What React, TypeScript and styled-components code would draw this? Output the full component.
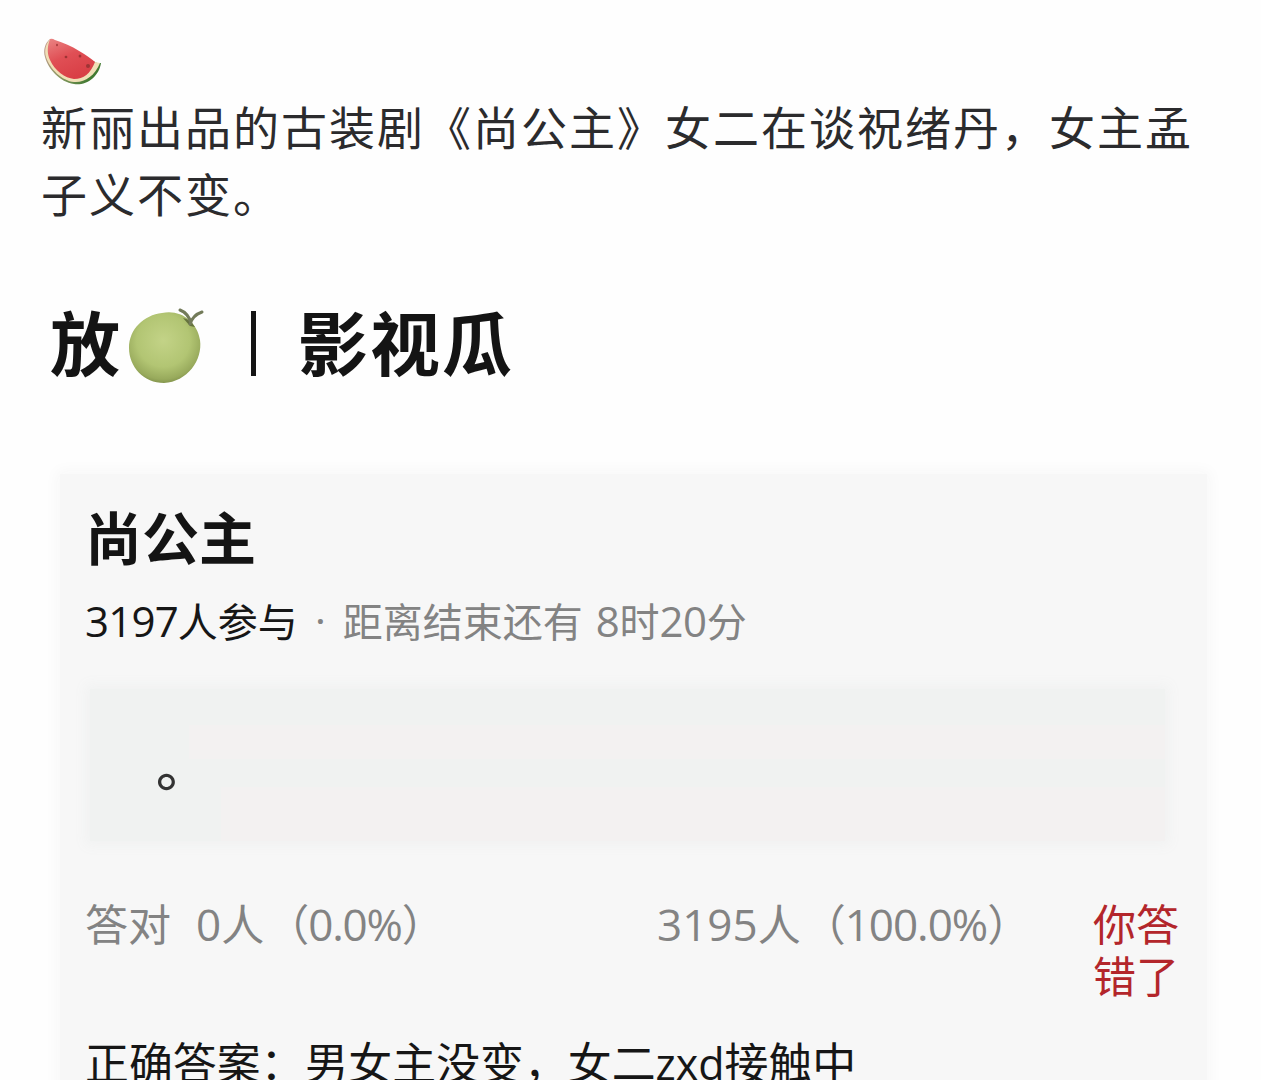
import styled, {createGlobalStyle} from 'styled-components';

/* -------------------------------------------------------------------------- */
/*                                   Styles                                   */
/* -------------------------------------------------------------------------- */
const GlobalStyle = createGlobalStyle`
  body {
    margin: 0;
    background-color: #fefefe;
    font-family: 'Noto Sans CJK SC', sans-serif;
  }

  h1,
  h2,
  p {
    margin: 0;
  }
`;

const Post = styled.main`
  box-sizing: border-box;
  height: 1080px;
  padding: 38px 40px 0 41px;
  overflow: hidden;
`;

const WatermelonIcon = styled.svg`
  display: block;
  width: 60px;
  height: 48px;
  margin-left: 2px;
`;

const Content = styled.p`
  margin-top: 6px;
  width: 1175px;
  font-size: 46px;
  line-height: 67px;
  letter-spacing: 2px;
  color: #2b2b2d;
`;

const Title = styled.h1`
  display: flex;
  align-items: center;
  height: 90px;
  margin: 72px 0 0 9px;
  font-size: 70px;
  font-weight: 700;
  line-height: 90px;
  letter-spacing: 2px;
  color: #141414;
`;

const TitleText = styled.span`
  margin-top: -4px;
`;

const MelonIcon = styled.svg`
  width: 78px;
  height: 78px;
  margin: 5px 46px 0 5px;
`;

const Divider = styled.span`
  width: 5px;
  height: 65px;
  margin-right: 42px;
  background-color: #141414;
`;

const Card = styled.section`
  box-sizing: border-box;
  height: 640px;
  width: 1147px;
  margin: 86px 0 0 19px;
  padding: 21px 26px 0;
  background-color: #f7f7f7;
  box-shadow: 0 0 14px 3px #f7f7f7;
`;

const CardTitle = styled.h2`
  margin-left: -1px;
  font-size: 57px;
  font-weight: 700;
  line-height: 80px;
  color: #141414;
`;

const Meta = styled.div`
  display: flex;
  margin-top: 7px;
  font-size: 40px;
  line-height: 76px;
  color: #838383;
`;

const Participants = styled.span`
  margin-left: -1px;
  color: #161616;
`;

const Dot = styled.span`
  display: flex;
  align-items: center;
  justify-content: center;
  width: 45px;
  font-family: 'Open Sans', sans-serif;
  font-size: 34px;
  font-weight: 600;
`;

const Latin = styled.span<{$size: number; $spacing?: number}>`
  font-family: 'Open Sans', 'Noto Sans', sans-serif;
  font-size: ${({$size}) => $size}px;
  letter-spacing: ${({$spacing = 0}) => $spacing}px;
`;

const Remaining = styled.span`
  word-spacing: 4px;
`;

const Answer = styled.div`
  box-sizing: border-box;
  height: 152px;
  margin: 30px 16px 0 4px;
  padding: 35px 0 0 66px;
  font-size: 54px;
  font-weight: 500;
  line-height: 80px;
  color: #333;
  background:
    linear-gradient(#f3f1f1, #f3f1f1) 99px 36px / 100% 34px no-repeat,
    linear-gradient(#f3f1f1, #f3f1f1) 131px 98px / 100% 60px no-repeat,
    #f0f2f1;
  box-shadow: 0 0 12px 5px #f1f2f2;
`;

const Stats = styled.div`
  display: flex;
  margin: 55px 0 0 -1px;
  font-size: 43px;
  line-height: 52px;
  color: #838383;
`;

const Stat = styled.span<{$width: number}>`
  flex: none;
  width: ${({$width}) => $width}px;
  white-space: pre;
`;

const Percent = styled.span`
  margin-left: 2px;
  letter-spacing: -1px;
`;

const Verdict = styled.span`
  width: 88px;
  color: #b3262b;
`;

const CorrectAnswer = styled.p`
  margin: 21px 0 0 -1px;
  font-size: 43.9px;
  line-height: 80px;
  color: #161616;
  white-space: nowrap;
`;

/* -------------------------------------------------------------------------- */
/*                                    Icons                                   */
/* -------------------------------------------------------------------------- */
const Watermelon: React.FC = () => (
  <WatermelonIcon viewBox="0 0 60 48">
    <defs>
      <linearGradient id="flesh" x1="0" y1="0" x2="0.5" y2="1">
        <stop offset="0" stopColor="#ea8584" />
        <stop offset="0.5" stopColor="#e04f55" />
        <stop offset="1" stopColor="#d93f46" />
      </linearGradient>
      <linearGradient id="rind" x1="0" y1="0" x2="1" y2="0.5">
        <stop offset="0" stopColor="#c79a92" />
        <stop offset="0.55" stopColor="#8b9a63" />
        <stop offset="1" stopColor="#427a32" />
      </linearGradient>
    </defs>
    <path
      d="M7 1C2 5 0 12 2 19C5 31 17 44 31 46C43 48 56 39 58 25L54 25Z"
      fill="url(#rind)"
    />
    <path d="M7 1C3 6 1 12 3 19C7 31 19 43 31 44C41 45 52 38 57 25L52 24Z" fill="#f0dfb6" />
    <path
      d="M7 1C4 9 4 16 7 22C12 33 22 40 31 41C41 41 47 36 52 24C45 18 29 7 12 2Q9 0 7 1Z"
      fill="url(#flesh)"
    />
    <g fill="#9e3435">
      <ellipse cx="14" cy="7" rx="0.8" ry="1.2" />
      <ellipse cx="23" cy="19" rx="1.4" ry="1.2" />
      <ellipse cx="37" cy="18" rx="1.4" ry="1.6" />
      <ellipse cx="45" cy="28" rx="2" ry="2" />
    </g>
  </WatermelonIcon>
);

const Melon: React.FC = () => (
  <MelonIcon viewBox="0 0 78 78">
    <defs>
      <radialGradient id="melon" cx="0.48" cy="0.4" r="0.62">
        <stop offset="0" stopColor="#c3d387" />
        <stop offset="0.6" stopColor="#b2c573" />
        <stop offset="0.88" stopColor="#98aa5c" />
        <stop offset="1" stopColor="#7e8f49" />
      </radialGradient>
    </defs>
    <path
      d="M35 6C53 2 70 14 73 33C76 53 60 75 37 76C17 76 2 60 2 41C2 22 17 8 35 6Z"
      fill="url(#melon)"
    />
    <path d="M56 11Q63 12 68 20L63 19Z" fill="#65723d" />
    <path
      d="M53 3Q61 6 64 16M63 17Q66 8 75 5"
      fill="none"
      stroke="#737b5a"
      strokeWidth="3"
      strokeLinecap="round"
    />
  </MelonIcon>
);

/* -------------------------------------------------------------------------- */
/*                                     App                                    */
/* -------------------------------------------------------------------------- */
const App: React.FC = () => (
  <>
    <GlobalStyle />
    <Post>
      <Watermelon />
      <Content>新丽出品的古装剧《尚公主》女二在谈祝绪丹，女主孟子义不变。</Content>
      <Title>
        <TitleText>放</TitleText>
        <Melon />
        <Divider />
        <TitleText>影视瓜</TitleText>
      </Title>
      <Card>
        <CardTitle>尚公主</CardTitle>
        <Meta>
          <Participants>
            <Latin $size={42} $spacing={-0.8}>
              3197
            </Latin>
            人参与
          </Participants>
          <Dot>·</Dot>
          <Remaining>
            距离结束还有{' '}
            <Latin $size={42} $spacing={-0.4}>
              8
            </Latin>
            时
            <Latin $size={42} $spacing={-0.4}>
              20
            </Latin>
            分
          </Remaining>
        </Meta>
        <Answer>。</Answer>
        <Stats>
          <Stat $width={111}>答对</Stat>
          <Stat $width={461}>
            <Latin $size={44}>0</Latin>人
            <Percent>
              （
              <Latin $size={44} $spacing={-1.2}>
                0.0%
              </Latin>
              ）
            </Percent>
          </Stat>
          <Stat $width={436}>
            <Latin $size={44}>3195</Latin>人
            <Percent>
              （
              <Latin $size={44} $spacing={-1}>
                100.0%
              </Latin>
              ）
            </Percent>
          </Stat>
          <Verdict>你答错了</Verdict>
        </Stats>
        <CorrectAnswer>
          正确答案：男女主没变，女二<Latin $size={43}>zxd</Latin>接触中
        </CorrectAnswer>
      </Card>
    </Post>
  </>
);

export default App;
